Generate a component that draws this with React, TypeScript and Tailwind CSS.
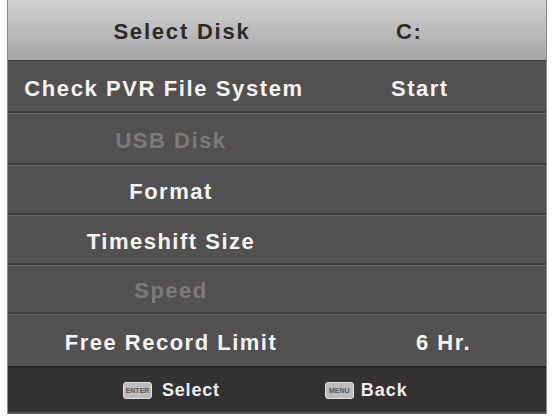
import React from "react";

const font = { fontFamily: '"Liberation Sans", Arial, sans-serif' };

function Row({
  label,
  value,
  dim,
  valuePad,
  h,
}: {
  label: string;
  value?: string;
  dim?: boolean;
  valuePad?: string;
  h: string;
}) {
  return (
    <div className={`flex items-center ${h} border-t-[2px] border-t-[#3f3c3d] shadow-[inset_0_1px_0_#676465]`}>
      <div
        className={`w-[326px] text-center font-bold text-[22px] tracking-[1.5px] pt-[4px] ${
          dim ? "text-[#7d7a7b]" : "text-[#f4f4f4]"
        }`}
      >
        {label}
      </div>
      {value && (
        <div className={`font-bold text-[22px] tracking-[1.5px] text-[#f4f4f4] pt-[4px] ${valuePad ?? ""}`}>{value}</div>
      )}
    </div>
  );
}

function Key({ text }: { text: string }) {
  return (
    <span className="inline-flex items-center justify-center w-[29px] h-[17px] rounded-[3px] bg-[#bdbcbc] border border-[#e2e2e2]">
      <span className="text-[7px] font-bold leading-none text-[#555] tracking-[0px]">{text}</span>
    </span>
  );
}

export default function App() {
  return (
    <div className="w-[553px] h-[418px] bg-white overflow-hidden" style={font}>
      <div className="ml-[7px] w-[540px] flex flex-col border-l border-r border-[#8a8889]">
        <div className="h-[60px] flex items-center bg-gradient-to-b from-[#d2d1d1] via-[#bdbcbc] to-[#a5a4a4]">
          <div className="w-[340px] text-center font-bold text-[22px] tracking-[1.8px] text-[#2b2929] pl-[8px] pt-[2px]">
            Select Disk
          </div>
          <div className="font-bold text-[22px] tracking-[1.5px] text-[#2b2929] pl-[48px] pt-[2px]">C:</div>
        </div>
        <div className="bg-[#535051] flex flex-col">
          <div className="flex items-center h-[51px] border-t border-t-[#3a3738]">
            <div className="w-[326px] text-center font-bold text-[22px] tracking-[1.6px] text-[#f4f4f4] pt-[4px] pr-[14px]">
              Check PVR File System
            </div>
            <div className="font-bold text-[22px] tracking-[1.5px] text-[#f4f4f4] pt-[4px] pl-[57px]">Start</div>
          </div>
          <Row label="USB Disk" dim h="h-[52px]" />
          <Row label="Format" h="h-[50px]" />
          <Row label="Timeshift Size" h="h-[50px]" />
          <Row label="Speed" dim h="h-[49px]" />
          <Row label="Free Record Limit" value="6 Hr." valuePad="pl-[82px]" h="h-[54px]" />
        </div>
        <div className="h-[48px] bg-[#343132] flex items-center border-t-[2px] border-t-[#2a2728] border-b-[2px] border-b-[#5a5758]">
          <div className="ml-[115px] flex items-center gap-[10px]">
            <Key text="ENTER" />
            <span className="font-bold text-[18px] tracking-[0.8px] text-[#eeeeee]">Select</span>
          </div>
          <div className="ml-[105px] flex items-center gap-[7px]">
            <Key text="MENU" />
            <span className="font-bold text-[18px] tracking-[1px] text-[#eeeeee]">Back</span>
          </div>
        </div>
      </div>
    </div>
  );
}
